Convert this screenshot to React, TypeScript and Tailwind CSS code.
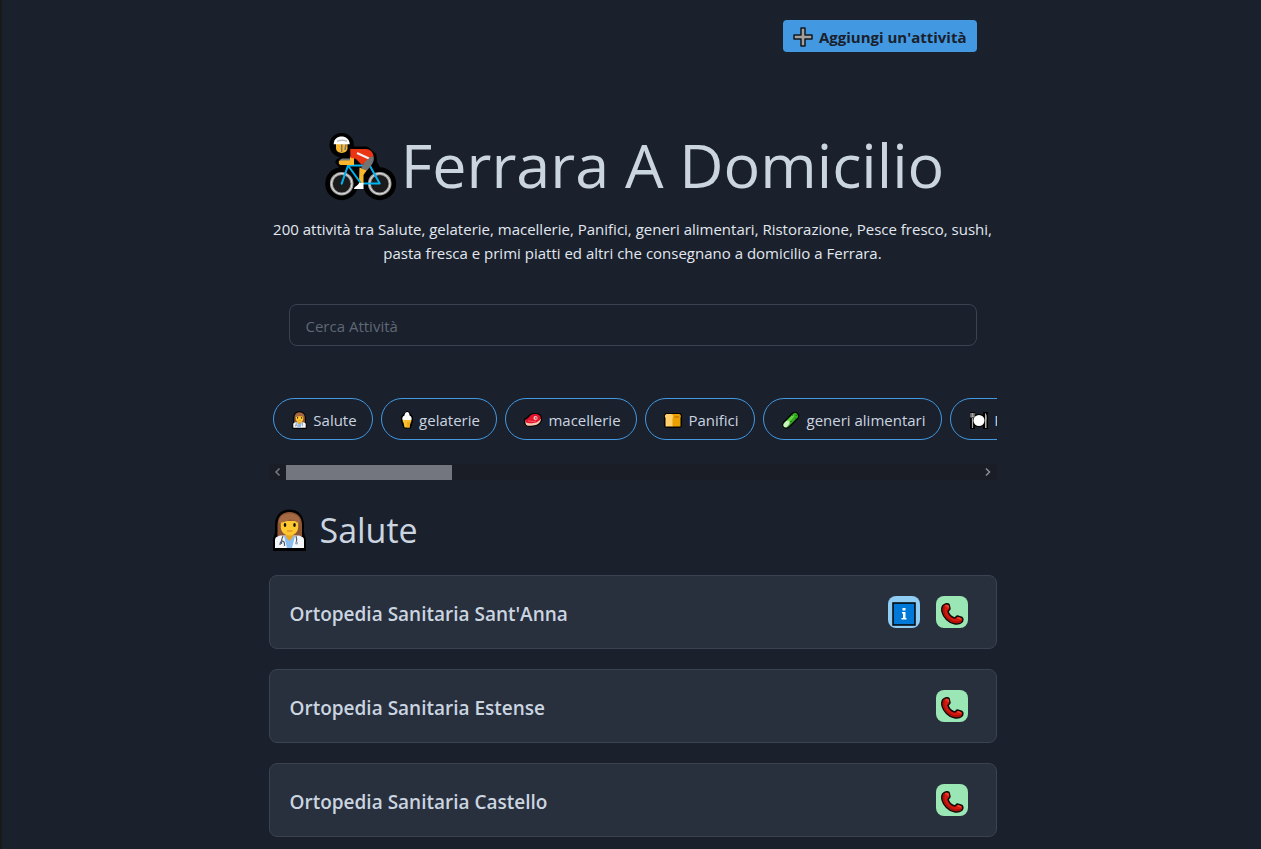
import type { ReactNode } from "react";

function CyclistIcon() {
  return (
    <svg viewBox="0 0 72 68" className="h-[68px] w-[72px] shrink-0" aria-hidden="true">
      <g fill="#000" stroke="#000" strokeWidth="7" strokeLinejoin="round" strokeLinecap="round">
        <circle cx="16.7" cy="50.7" r="13" />
        <circle cx="54.7" cy="50.7" r="13" />
        <circle cx="16.7" cy="12" r="8.700" />
        <path d="M23 18L26 17H41L48 23L48.500 30L54 40V50H17L20 37L16 31L14 29L22 25Z" />
      </g>
      <g fill="#1b1b1b" stroke="#9b9b9b" strokeWidth="3">
        <circle cx="16.7" cy="50.7" r="10.3" />
        <circle cx="54.7" cy="50.7" r="10.3" />
      </g>
      <g fill="none" stroke="#e4e4e4" strokeWidth="1">
        <circle cx="16.7" cy="50.7" r="10.3" />
        <circle cx="54.7" cy="50.7" r="10.3" />
      </g>
      <path d="M23 32.500H41M35 50.500H54.700L45 33" fill="none" stroke="#00b3f0" strokeWidth="2" strokeLinecap="round" strokeLinejoin="round" />
      <path d="M34.500 34.500L42 37L38.500 42V51H34Z" fill="#fbb72b" />
      <path d="M16.700 50.700L23 32.500L35 49" fill="none" stroke="#00b3f0" strokeWidth="2" strokeLinecap="round" strokeLinejoin="round" />
      <path d="M34 50H38.500V56H29C29 53.500 33 53 34 50Z" fill="#fff" />
      <path d="M25 24H29V32H16C13 32 13 27 16 27H25Z" fill="#fbb72b" />
      <path d="M14.500 27L17 25.500H25V27.500H14.500Z" fill="#777" />
      <path d="M25.300 16H41C45 16 48 19 48.500 23L37 32L31 26L25.300 24.500Z" fill="#e93513" />
      <path d="M32 20L44 25.500" stroke="#f3eeee" strokeWidth="2" />
      <path d="M48.500 23C50 29 46 33 42 37.500L36 35.500C38 31 42 25 48.500 23Z" fill="#737373" />
      <path d="M11 10H22.500V15C22.500 21.500 11 21.500 11 15Z" fill="#fbb72b" />
      <path d="M16.700 11V19M21 11L20 17" stroke="#777" strokeWidth="1.500" />
      <path d="M8.700 11.300C8.500 1 24.500 1 24.700 11.300Z" fill="#fff" />
      <path d="M12 8.300C15 6.800 20 6.800 22 8.300" fill="none" stroke="#b8bdc3" strokeWidth="1.500" />
    </svg>
  );
}

function DoctorIcon({ className }: { className: string }) {
  return (
    <svg viewBox="0 0 33 42" className={className} aria-hidden="true">
      <path d="M0 42V30C1 27 2 25 2 22V16C2 6 8 .500 16.500 .500S31 6 31 16V22C31 25 32 27 33 30V42Z" fill="#000" />
      <path d="M4.500 27V16C4.500 8 9 3 16.500 3S29 8 29 16V27Z" fill="#8f5636" />
      <path d="M2 39V31C2 28 5 26.500 9 26.500H24C28 26.500 31 28 31 31V39Z" fill="#f5f6f8" />
      <path d="M11 27H22L19 39H14Z" fill="#8bbcf0" />
      <path d="M13 23H20V28L16.500 32L13 28Z" fill="#e9a51c" />
      <path d="M7.800 12H25.200V18C25.200 23 21 26.500 16.500 26.500S7.800 23 7.800 18Z" fill="#ffc82e" />
      <path d="M6 14C6 8 10 4.500 16.500 4.500S27 8 27 14C24 14 22 12.500 20.500 10.500L19 12L17.500 10C14 13 10 13 6 14Z" fill="#a56a43" />
      <ellipse cx="12" cy="16" rx="1.3" ry="2" fill="#111" />
      <ellipse cx="21.500" cy="16" rx="1.3" ry="2" fill="#111" />
      <path d="M14.500 22H19" stroke="#d57824" strokeWidth="1.200" strokeLinecap="round" />
      <path d="M10 27C8 31 8 32 8.500 35M23 27C24 30 24 31 23.500 33M7 36C7 31 11.500 31 11.500 35V37" fill="none" stroke="#4f6074" strokeWidth="1.200" />
      <circle cx="23.500" cy="34" r="1.500" fill="#9aa7b5" />
    </svg>
  );
}

function IceCreamIcon() {
  return (
    <svg viewBox="0 0 12 18" className="h-[18px] w-3" aria-hidden="true">
      <path d="M6 0L9 2.500L11.500 6V10L9.500 17H3L.500 10V6L3 3Z" fill="#000" stroke="#000" strokeLinejoin="round" />
      <path d="M1.500 9H10.500L10 11.500H9.500L8.500 16.500H3.500L2.500 11.500H2Z" fill="#fbc02d" />
      <path d="M6 11H9.500L8.500 16.500H6Z" fill="#f2a91c" />
      <path d="M6 1C8 1 8.500 3 8.500 4.500C10.500 5 11 7 10.500 9H1.500C1 7 1.500 5 3.500 4.500C3.500 3 4 1.500 6 1Z" fill="#fff" />
    </svg>
  );
}

function MeatIcon() {
  return (
    <svg viewBox="0 0 18 14" className="h-[14px] w-[18px]" aria-hidden="true">
      <path d="M1 6C4 5 5 1 9 1H14C17 2 18 5 17 8C15 13 10 13 5 13C1 13 .500 10 1 6Z" fill="#000" stroke="#000" strokeWidth="1.500" />
      <path d="M1.500 7L17 6C16.500 12 10 12.800 5 12.800C2 12.800 1 11 1.500 7Z" fill="#f7c8ad" />
      <path d="M1.500 6.500C5 6 6 1 10 1C15 .500 17.500 3 16.500 6C14 10.500 7 10.500 4 10C2 10 1 8.500 1.500 6.500Z" fill="#e3132d" />
      <circle cx="11.500" cy="5" r="2.100" fill="#f6c5b8" />
      <circle cx="11.900" cy="5" r="1" fill="#bd5263" />
      <path d="M4 8C7 8 9 9 12 8" fill="none" stroke="#ff5963" />
    </svg>
  );
}

function BreadIcon() {
  return (
    <svg viewBox="0 0 18 15" className="h-[15px] w-[18px]" aria-hidden="true">
      <rect width="18" height="15" rx="3" fill="#000" />
      <path d="M3 1H15C17.500 1.500 17 4 16.500 5V13.500H8V2Z" fill="#eaa000" />
      <path d="M2.500 1H7C9.500 1.500 9.500 4 8.500 5V13.500H1.500V5C.500 4 .500 1.500 2.500 1Z" fill="#ffd06b" />
      <path d="M10 3H15V5H11Z" fill="#ce8200" />
    </svg>
  );
}

function CucumberIcon() {
  return (
    <svg viewBox="0 0 18 18" className="h-[18px] w-[18px]" aria-hidden="true">
      <path d="M4.500 13.500L13 5" stroke="#000" strokeWidth="8.500" strokeLinecap="round" />
      <path d="M4.500 13.500L13 5" stroke="#33aa22" strokeWidth="6" strokeLinecap="round" />
      <path d="M4 13L11 5" stroke="#66d443" strokeWidth="2.500" strokeLinecap="round" />
      <ellipse cx="4.5" cy="13" rx="2.300" ry="3.800" transform="rotate(40 4.500 13)" fill="#c9f2bf" />
      <path d="M10 4H11M14.500 4V5M13 8H14M9 10V11" stroke="#176f12" strokeWidth="1.500" />
    </svg>
  );
}

function PlateIcon() {
  return (
    <svg viewBox="0 0 18 17" className="h-[17px] w-[18px]" aria-hidden="true">
      <path d="M1 1H4V16H1ZM14 1H17V16H14Z" fill="#000" stroke="#000" strokeWidth="2" />
      <circle cx="9" cy="8.500" r="6.800" fill="#000" />
      <path d="M2.500 6V16M1 1V5H4V1M2.500 1V5" fill="none" stroke="#a9a5a1" strokeWidth="1.200" />
      <path d="M15 1C17 2 17 6 16.500 9V16H15Z" fill="#bcb6b0" />
      <circle cx="9" cy="8.500" r="5.500" fill="#fff" />
    </svg>
  );
}

function PlusIcon() {
  return (
    <svg viewBox="0 0 20 20" className="size-5" aria-hidden="true">
      <path d="M8 1H12V8H19V12H12V19H8V12H1V8H8Z" fill="#a5a09c" stroke="#111820" strokeWidth="1.500" strokeLinejoin="round" />
    </svg>
  );
}

function PhoneIcon() {
  return (
    <svg viewBox="0 0 24 24" className="size-6" aria-hidden="true">
      <path d="M3 3.500C5 1.500 8 1.200 9 2.500L10 6.500C10 8 8 8.500 8 9.500C9 13 11.500 15 14.500 16C16 16 16 14 17.500 14L22 15.500C23.500 16.500 23 19 21.500 20.500C18 23.500 11 22 6.500 17.500C2 13 .500 7 3 3.500Z" fill="#d4180f" stroke="#100b08" strokeWidth="1.500" />
      <path d="M4 4C3 9 4 13 8 16.500C12 20 17 21 21 19.500" fill="none" stroke="#a90f0a" strokeWidth="1.500" />
      <path d="M5.500 3.500L8 4L8.500 6M17.500 15.500L21 17" fill="none" stroke="#f0452a" strokeWidth="1.500" />
    </svg>
  );
}

function InfoIcon() {
  return (
    <svg viewBox="0 0 24 24" className="size-6" aria-hidden="true">
      <rect x="1" y="1" width="22" height="22" fill="#0078d7" stroke="#000" strokeWidth="1.500" />
      <path d="M10.500 6H13.500V8.500H10.500ZM10 10H13.500V16H14.500V17.500H9.500V16H11V11.500H10Z" fill="#fff" />
    </svg>
  );
}

const categories: { name: string; icon: ReactNode; width: string }[] = [
  { name: "Salute", icon: <DoctorIcon className="h-[18px] w-[15px]" />, width: "w-[100px]" },
  { name: "gelaterie", icon: <IceCreamIcon />, width: "w-[116px]" },
  { name: "macellerie", icon: <MeatIcon />, width: "w-[132px]" },
  { name: "Panifici", icon: <BreadIcon />, width: "w-[110px]" },
  { name: "generi alimentari", icon: <CucumberIcon />, width: "w-[179px]" },
  { name: "Ristorazione", icon: <PlateIcon />, width: "w-[148px]" },
];

const shops = [
  { name: "Ortopedia Sanitaria Sant'Anna", info: true },
  { name: "Ortopedia Sanitaria Estense", info: false },
  { name: "Ortopedia Sanitaria Castello", info: false },
];

export default function App() {
  return (
    <div className="min-h-screen border-l-2 border-[#191919] bg-[#1a202c] pl-0.5 font-['Open_Sans',sans-serif] text-[#cbd5e0]">
      <main className="mx-auto max-w-3xl px-5 pb-3">
        <header className="flex justify-end px-5 pt-5">
          <button className="flex h-8 items-center gap-1.5 rounded-sm bg-[#4299e1] px-2.5 pt-0.5 text-[15px] font-bold text-[#1a202c]">
            <PlusIcon />
            Aggiungi un'attività
          </button>
        </header>

        <h1 className="mt-[75px] flex h-20 items-center justify-center gap-1 pl-1 text-[61px] leading-none whitespace-nowrap">
          <CyclistIcon />
          <span className="pb-1.5">Ferrara A Domicilio</span>
        </h1>
        <p className="mt-2.5 text-center text-[15px] leading-6 text-[#e2e8f0]">
          200 attività tra Salute, gelaterie, macellerie, Panifici, generi alimentari, Ristorazione, Pesce fresco, sushi,
          pasta fresca e primi piatti ed altri che consegnano a domicilio a Ferrara.
        </p>

        <div className="mt-[39px] px-5">
          <input
            type="search"
            aria-label="Cerca Attività"
            placeholder="Cerca Attività"
            className="h-[42px] w-full rounded-lg border border-[#3b4252] bg-transparent px-4 pt-0.5 text-[15px] outline-none placeholder:text-[#5f6875]"
          />
        </div>

        <nav aria-label="Categorie" className="mt-[52px]">
          <div className="flex gap-2 overflow-x-auto pl-1 [scrollbar-width:none]">
            {categories.map((c) => (
              <button
                key={c.name}
                className={`flex h-[42px] shrink-0 items-center justify-center gap-1.5 rounded-full border border-[#4299e1] pt-0.5 pl-1 text-[15px] whitespace-nowrap ${c.width}`}
              >
                {c.icon}
                {c.name}
              </button>
            ))}
          </div>
          <div className="mt-6 flex h-4 items-center bg-[#1a1d25]">
            <button aria-label="Scorri a sinistra" className="flex w-[17px] justify-center">
              <svg viewBox="0 0 8 8" className="size-2" fill="none" stroke="#777a80" strokeWidth="1.500"><path d="M6.500 .500L3 4L6.500 7.500" /></svg>
            </button>
            <div className="flex-1">
              <div className="h-[15px] w-[24%] bg-[#73767e]" />
            </div>
            <button aria-label="Scorri a destra" className="flex w-[17px] justify-center">
              <svg viewBox="0 0 8 8" className="size-2" fill="none" stroke="#8b8e94" strokeWidth="1.500"><path d="M2 .500L5.500 4L2 7.500" /></svg>
            </button>
          </div>
        </nav>

        <section>
          <h2 className="mt-6 flex h-[51px] items-center gap-3.5 pl-1 text-[34px] leading-none">
            <DoctorIcon className="h-[42px] w-[33px]" />
            Salute
          </h2>
          <ul className="mt-5 flex flex-col gap-5">
            {shops.map((s) => (
              <li key={s.name} className="flex items-center justify-between rounded-lg border border-[#3b4352] bg-[#282f3d] p-5">
                <h3 className="pt-1 text-[19px] leading-7 font-semibold">{s.name}</h3>
                <div className="flex gap-4 pr-2">
                  {s.info && (
                    <button aria-label={`Informazioni su ${s.name}`} className="flex size-8 items-center justify-center rounded-lg bg-[#90cdf4] pt-1">
                      <InfoIcon />
                    </button>
                  )}
                  <button aria-label={`Chiama ${s.name}`} className="flex size-8 items-center justify-center rounded-lg bg-[#9ae6b4] pt-1">
                    <PhoneIcon />
                  </button>
                </div>
              </li>
            ))}
          </ul>
        </section>
      </main>
    </div>
  );
}
